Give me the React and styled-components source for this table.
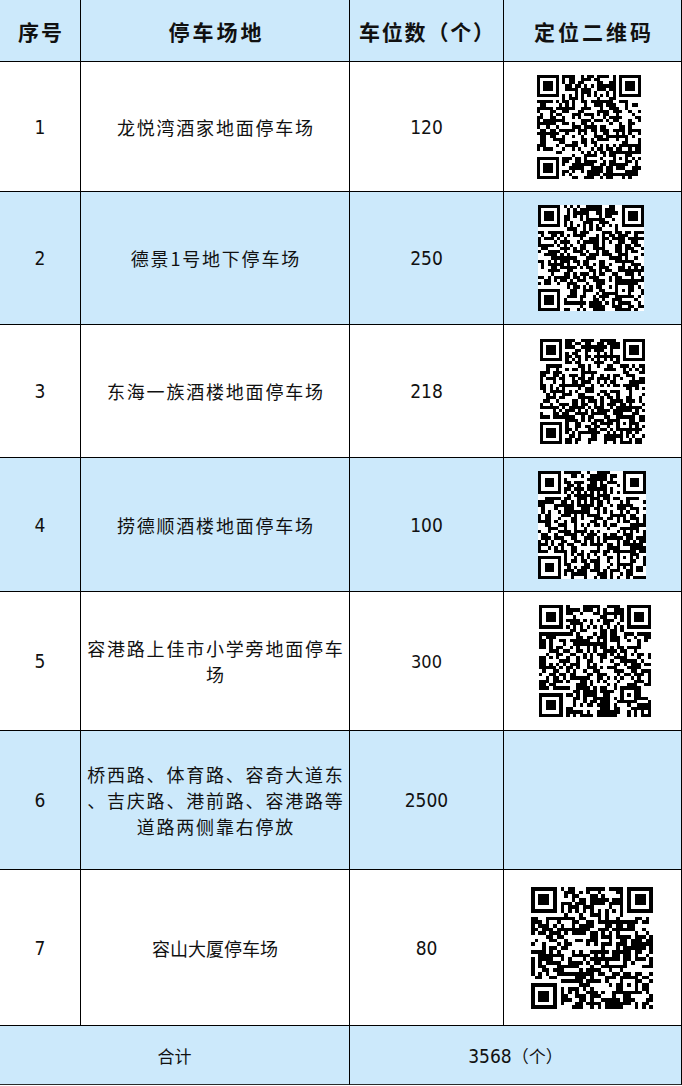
import React from 'react';
import styled, { createGlobalStyle } from 'styled-components';

const Global = createGlobalStyle`
  html, body { margin: 0; padding: 0; background: #fff; }
  body { font-family: "Noto Sans CJK SC", "Noto Sans", sans-serif; color: #000; }
`;

const BLUE = '#cce9fb';

const Table = styled.div`
  width: 682px;
  display: flex;
  flex-direction: column;
`;

const Row = styled.div`
  display: grid;
  grid-template-columns: 81px 269px 154px 178px;
  height: ${(p) => p.$h}px;
  background: ${(p) => (p.$blue ? BLUE : '#fff')};
`;

const Cell = styled.div`
  box-sizing: border-box;
  grid-column: span ${(p) => p.$span || 1};
  border-right: 1px solid #000;
  border-bottom: 1px solid ${(p) => (p.$last ? '#2b2b2b' : '#000')};
  display: flex;
  align-items: center;
  justify-content: center;
  text-align: center;
  min-width: 0;
  overflow: hidden;
`;

const HeadText = styled.span`
  font-size: 21px;
  font-weight: 700;
  letter-spacing: ${(p) => p.$ls ?? 2}px;
  padding-left: ${(p) => p.$ls ?? 2}px;
  color: #111;
`;

const Place = styled.div`
  font-size: 18px;
  line-height: 26px;
  letter-spacing: ${(p) => (p.$tight ? 0 : 1.8)}px;
  padding-left: ${(p) => (p.$tight ? 0 : 1.8)}px;
  color: #111;
  white-space: nowrap;
`;

const Num = styled.span`
  font-family: "Liberation Sans Narrow", "DejaVu Sans Condensed", "Open Sans", sans-serif;
  font-size: ${(p) => p.$size || 19}px;
  color: #111;
`;

const TotalText = styled.span`
  font-size: 17px;
  color: #111;
`;

const QrBox = styled.svg`
  display: block;
  shape-rendering: crispEdges;
  margin-left: ${(p) => p.$dx || 0}px;
`;

function rng(seed) {
  let s = seed >>> 0;
  return () => {
    s = (s * 1664525 + 1013904223) >>> 0;
    return s / 4294967296;
  };
}

function buildQr(seed) {
  const N = 33;
  const r = rng(seed);
  const m = Array.from({ length: N }, () => Array(N).fill(null));
  const finder = (ox, oy) => {
    for (let y = -1; y <= 7; y++)
      for (let x = -1; x <= 7; x++) {
        const X = ox + x, Y = oy + y;
        if (X < 0 || Y < 0 || X >= N || Y >= N) continue;
        const inside = x >= 0 && x <= 6 && y >= 0 && y <= 6;
        let d = false;
        if (inside) {
          const edge = x === 0 || x === 6 || y === 0 || y === 6;
          const core = x >= 2 && x <= 4 && y >= 2 && y <= 4;
          d = edge || core;
        }
        m[Y][X] = d;
      }
  };
  finder(0, 0);
  finder(N - 7, 0);
  finder(0, N - 7);
  for (let i = 8; i < N - 8; i++) {
    m[6][i] = i % 2 === 0;
    m[i][6] = i % 2 === 0;
  }
  const ax = N - 7;
  for (let y = -2; y <= 2; y++)
    for (let x = -2; x <= 2; x++) {
      const edge = Math.abs(x) === 2 || Math.abs(y) === 2;
      m[ax + y][ax + x] = edge || (x === 0 && y === 0);
    }
  for (let y = 0; y < N; y++)
    for (let x = 0; x < N; x++) if (m[y][x] === null) m[y][x] = r() < 0.55;
  let d = '';
  for (let y = 0; y < N; y++)
    for (let x = 0; x < N; x++) if (m[y][x]) d += `M${x} ${y}h1v1h-1z`;
  return { N, d };
}

function Qr({ seed, size, dx }) {
  const { N, d } = React.useMemo(() => buildQr(seed), [seed]);
  return (
    <QrBox $dx={dx} width={size} height={size} viewBox={`0 0 ${N} ${N}`}>
      <rect width={N} height={N} fill="#fff" />
      <path d={d} fill="#000" />
    </QrBox>
  );
}

const rows = [
  { no: '1', lines: ['龙悦湾酒家地面停车场'], num: '120', h: 130, qr: { seed: 11, size: 104, dx: -8 } },
  { no: '2', lines: ['德景1号地下停车场'], num: '250', h: 133, qr: { seed: 27, size: 106, dx: -4 } },
  { no: '3', lines: ['东海一族酒楼地面停车场'], num: '218', h: 133, qr: { seed: 53, size: 105, dx: 0 } },
  { no: '4', lines: ['捞德顺酒楼地面停车场'], num: '100', h: 134, qr: { seed: 91, size: 108, dx: -2 } },
  { no: '5', lines: ['容港路上佳市小学旁地面停车', '场'], num: '300', numSize: 18, h: 139, qr: { seed: 137, size: 112, dx: 4 } },
  { no: '6', lines: ['桥西路、体育路、容奇大道东', '、吉庆路、港前路、容港路等', '道路两侧靠右停放'], num: '2500', h: 139 },
  { no: '7', lines: ['容山大厦停车场'], tight: true, num: '80', h: 156, qr: { seed: 173, size: 122, dx: -2 } },
];

export default function App() {
  return (
    <>
      <Global />
      <Table>
        <Row $h={62} $blue>
          <Cell><HeadText>序号</HeadText></Cell>
          <Cell><HeadText $ls={3}>停车场地</HeadText></Cell>
          <Cell><HeadText $ls={1.8}>车位数（个）</HeadText></Cell>
          <Cell><HeadText $ls={3}>定位二维码</HeadText></Cell>
        </Row>
        {rows.map((r, i) => (
          <Row key={r.no} $h={r.h} $blue={i % 2 === 1}>
            <Cell><Num>{r.no}</Num></Cell>
            <Cell>
              <Place $tight={r.tight}>
                {r.lines.map((l) => (
                  <div key={l}>{l}</div>
                ))}
              </Place>
            </Cell>
            <Cell><Num $size={r.numSize}>{r.num}</Num></Cell>
            <Cell>{r.qr && <Qr {...r.qr} />}</Cell>
          </Row>
        ))}
        <Row $h={59} $blue>
          <Cell $span={2} $last><TotalText>合计</TotalText></Cell>
          <Cell $span={2} $last>
            <TotalText><Num>3568</Num>（个）</TotalText>
          </Cell>
        </Row>
      </Table>
    </>
  );
}
